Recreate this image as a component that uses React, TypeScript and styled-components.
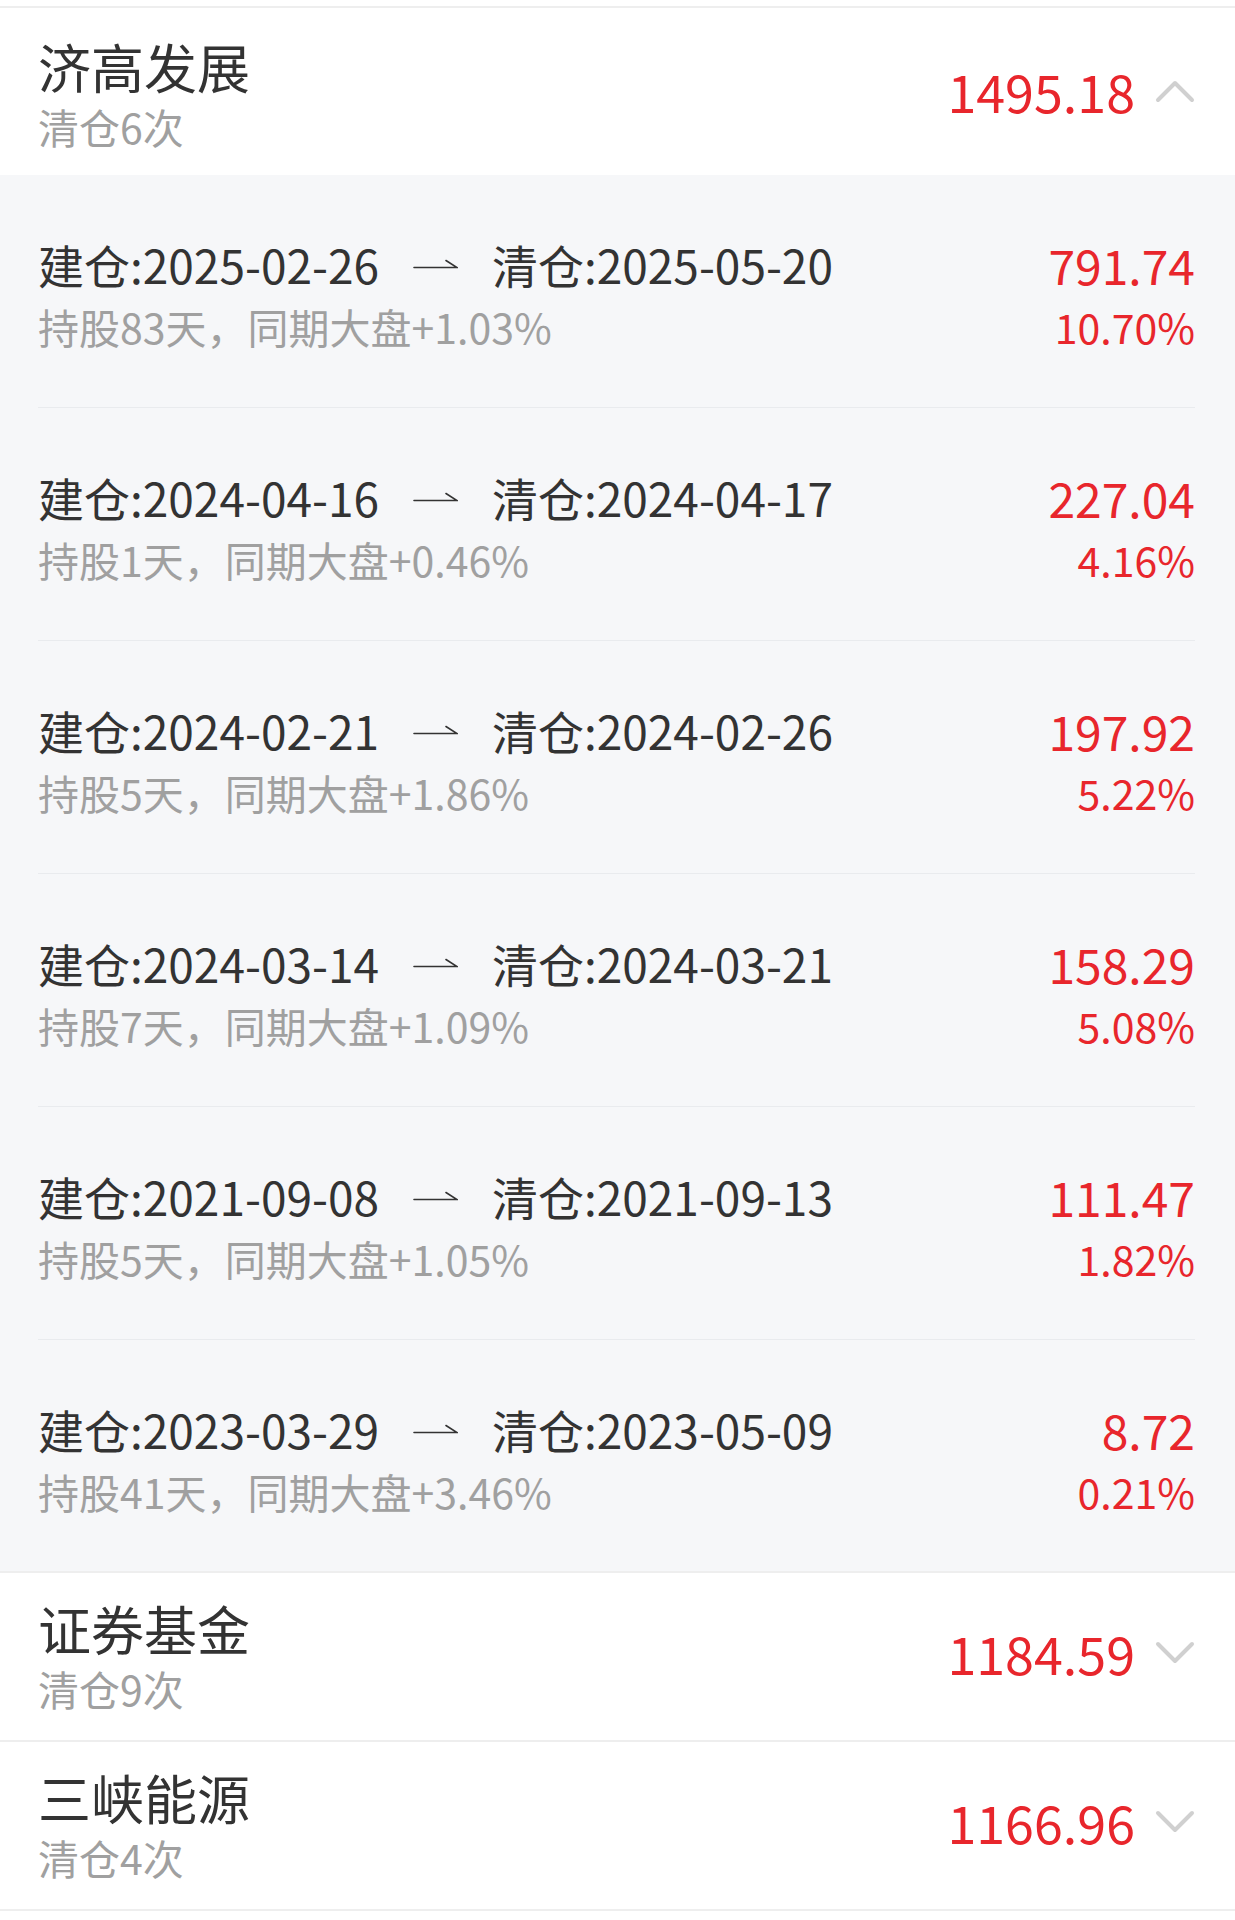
import React, {FC} from 'react';
import styled, {createGlobalStyle} from "styled-components";

const GlobalStyle = createGlobalStyle`
  html, body {
    margin: 0;
    padding: 0;
    background: #ffffff;
  }

  body {
    font-family: "Noto Sans CJK SC", "Noto Sans", sans-serif;
    color: #333333;
  }
`

const RED = '#e8262c';

const Page = styled.div`
  width: 1235px;
  padding-top: 6px;
`
const Stock = styled.section`
  border-top: 2px solid #eeeeee;
`
const StockHeader = styled.div<{ $open?: boolean }>`
  display: flex;
  align-items: center;
  justify-content: space-between;
  padding: ${props => props.$open ? 27 : 24}px 40px ${props => props.$open ? 20 : 23}px 38px;
  background: #ffffff;
`
const NameBlock = styled.div`
  display: flex;
  flex-direction: column;
`
const Name = styled.div`
  font-size: 53px;
  line-height: 62px;
  color: #333333;
`
const Count = styled.div`
  font-size: 41px;
  line-height: 58px;
  color: #a0a0a0;
`
const Total = styled.div`
  display: flex;
  align-items: center;
  gap: 20px;
  margin-bottom: 8px;
`
const TotalValue = styled.span`
  font-size: 52px;
  line-height: 62px;
  color: ${RED};
`
const Trades = styled.div`
  background: #f6f7f9;
`
const Trade = styled.div<{ $last?: boolean }>`
  display: flex;
  align-items: center;
  justify-content: space-between;
  margin: 0 40px 0 38px;
  padding: 58px 0 ${props => props.$last ? 49 : 50}px 0;
  border-bottom: ${props => props.$last ? 'none' : '1px solid #e9ebee'};
`
const TradeMain = styled.div`
  display: flex;
  flex-direction: column;
`
const Dates = styled.div`
  display: flex;
  align-items: center;
  gap: 34px;
  font-size: 46px;
  line-height: 62px;
  color: #333333;
`
const Hold = styled.div`
  font-size: 41px;
  line-height: 62px;
  color: #a0a0a0;
`
const TradeResult = styled.div`
  display: flex;
  flex-direction: column;
  align-items: flex-end;
  color: ${RED};
`
const Profit = styled.div`
  font-size: 48px;
  line-height: 62px;
`
const Rate = styled.div`
  font-size: 41px;
  line-height: 62px;
`

const Arrow: FC = () => (
  <svg width="45" height="14" viewBox="0 0 45 14">
    <path d="M1 10.5 H44 L33 3.5" fill="none" stroke="#333" strokeWidth="1.6" strokeLinecap="round"/>
  </svg>
);

const Chevron: FC<{ up?: boolean }> = ({up}) => (
  <svg width="40" height="24" viewBox="0 0 40 24">
    <path
      d={up ? "M3 21 L20 4 L37 21" : "M3 3 L20 20 L37 3"}
      fill="none"
      stroke="#d0d0d0"
      strokeWidth="4"
      strokeLinecap="round"
      strokeLinejoin="round"
    />
  </svg>
);

interface TradeData {
  open: string,
  close: string,
  days: number,
  market: string,
  profit: string,
  rate: string,
}

const trades: TradeData[] = [
  {open: '2025-02-26', close: '2025-05-20', days: 83, market: '+1.03%', profit: '791.74', rate: '10.70%'},
  {open: '2024-04-16', close: '2024-04-17', days: 1, market: '+0.46%', profit: '227.04', rate: '4.16%'},
  {open: '2024-02-21', close: '2024-02-26', days: 5, market: '+1.86%', profit: '197.92', rate: '5.22%'},
  {open: '2024-03-14', close: '2024-03-21', days: 7, market: '+1.09%', profit: '158.29', rate: '5.08%'},
  {open: '2021-09-08', close: '2021-09-13', days: 5, market: '+1.05%', profit: '111.47', rate: '1.82%'},
  {open: '2023-03-29', close: '2023-05-09', days: 41, market: '+3.46%', profit: '8.72', rate: '0.21%'},
];

interface StockProps {
  name: string,
  times: number,
  total: string,
  open?: boolean,
  items?: TradeData[],
}

const StockItem: FC<StockProps> = ({name, times, total, open, items}) => (
  <Stock>
    <StockHeader $open={open}>
      <NameBlock>
        <Name>{name}</Name>
        <Count>清仓{times}次</Count>
      </NameBlock>
      <Total>
        <TotalValue>{total}</TotalValue>
        <Chevron up={open}/>
      </Total>
    </StockHeader>
    {open && items && (
      <Trades>
        {items.map((t, i) => (
          <Trade key={t.open} $last={i === items.length - 1}>
            <TradeMain>
              <Dates>
                <span>建仓:{t.open}</span>
                <Arrow/>
                <span>清仓:{t.close}</span>
              </Dates>
              <Hold>持股{t.days}天，同期大盘{t.market}</Hold>
            </TradeMain>
            <TradeResult>
              <Profit>{t.profit}</Profit>
              <Rate>{t.rate}</Rate>
            </TradeResult>
          </Trade>
        ))}
      </Trades>
    )}
  </Stock>
);

export default function App() {
  return (
    <Page>
      <GlobalStyle/>
      <StockItem name="济高发展" times={6} total="1495.18" open items={trades}/>
      <StockItem name="证券基金" times={9} total="1184.59"/>
      <StockItem name="三峡能源" times={4} total="1166.96"/>
      <Stock/>
    </Page>
  );
}
